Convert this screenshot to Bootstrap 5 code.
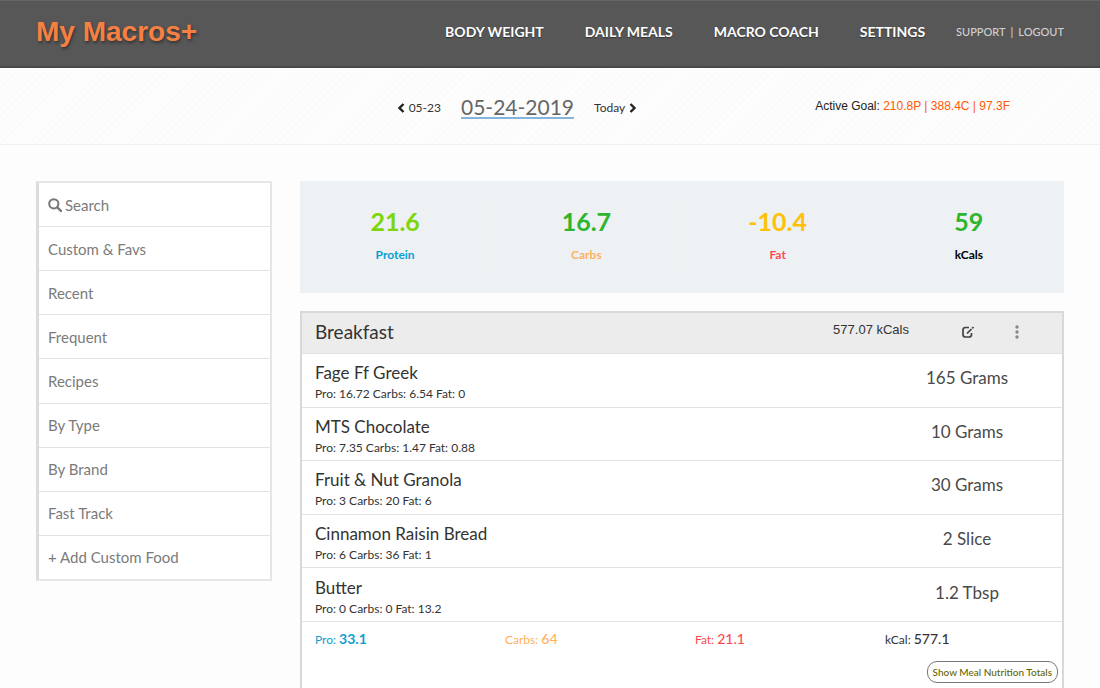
<!DOCTYPE html>
<html lang="en">
<head>
<meta charset="utf-8">
<meta name="viewport" content="width=device-width, initial-scale=1">
<title>My Macros+</title>
<link href="https://cdn.jsdelivr.net/npm/bootstrap@5.3.0/dist/css/bootstrap.min.css" rel="stylesheet">
<style>
  :root { --edge: 36px; --line: #e2e2e2; --protein: #0a9fd0; --carbs: #ffb15e; --fat: #ff4b50; }
  body { font-family: Lato, "Open Sans", sans-serif; font-size: 14px; line-height: 20px; color: #333; background: #fdfdfd; }
  a { color: inherit; text-decoration: none; }

  .topbar { background: #575757; border-top: 1px solid #666; border-bottom: 2px solid #484848; min-height: 68px; padding: 0 var(--edge) 4px; }
  .brand { font: bold 28px/40px "Liberation Sans", Arial, sans-serif; color: #f58042; text-shadow: 1px 2px 3px #333; }
  .main-links { gap: 41px; font-size: 14px; font-weight: 700; color: #fff; text-shadow: 0 1px 1px #333; }
  .side-links { gap: 5px; margin-left: 31px; font-size: 11px; font-weight: 500; color: #d0d0d0; }

  .datebar { min-height: 77px; padding: 0 var(--edge); border-bottom: 1px solid #efefef;
    background: repeating-linear-gradient(135deg, #fdfdfd 0 3px, #fbfbfb 3px 5px); }
  .day-links { font-size: 12px; gap: 20px; padding: 3px 0 0 18px; }
  .day-links svg { width: 8px; height: 10px; }
  .current-day { font-size: 21px; line-height: 20px; color: #666; border-bottom: 2px solid #84b4dc; }
  .goal { font: 12px/16px "Liberation Sans", Arial, sans-serif; color: #222; padding-right: 54px; }
  .goal span { color: #ff5a00; }

  .page { padding: 36px var(--edge) 0; }
  .page > .row { --bs-gutter-x: 28px; }

  .food-menu { min-height: 400px; background: #fff; border: 2px solid #e6e6e6; border-left: 3px solid #dcdcdc; font-size: 15px; color: #7b7b7b; }
  .food-menu a { padding: 0 9px; gap: 3px; }
  .food-menu a + a { border-top: 1px solid var(--line); }

  .summary { background: #edf1f3; min-height: 112px; padding: 20px 0; }
  .summary .col + .col { border-left: 1px solid #f0f2f2; }
  .big-number { font-size: 25px; line-height: 40px; font-weight: 700; }
  .macro-name { font-size: 12px; line-height: 28px; font-weight: 700; }
  .c-protein { color: var(--protein); } .c-carbs { color: var(--carbs); } .c-fat { color: var(--fat); }
  .v-lime { color: #7ed60a; } .v-green { color: #2db52d; } .v-amber { color: #ffc107; }

  .meal { margin-top: 18px; background: #fff; border: 2px solid #d8d8d8; min-height: 400px; }
  .meal-head { background: #ececec; min-height: 41px; border-bottom: 1px solid var(--line); padding: 0 43px 3px 13px; }
  .meal-head h2 { font-size: 19px; line-height: 24px; margin: 0; font-weight: 400; }
  .meal-kcal { font: 13px/20px "Liberation Sans", Arial, sans-serif; padding-bottom: 4px; margin-right: 52px; }
  .icon-btn { padding: 0; border: 0; background: none; line-height: 1; }
  .icon-btn + .icon-btn { margin-left: 40px; }
  .foods { width: 100%; height: 268px; }
  .foods tr { border-bottom: 1px solid var(--line); }
  .foods td { padding: 6px 13px 0; }
  .foods td + td { width: 25%; padding: 0 0 4px; text-align: center; font-size: 17px; color: #4a4a4a; }
  .food-name { font-size: 17px; line-height: 22px; }
  .food-macros { font-size: 12px; line-height: 20px; }
  .totals { padding: 7px 0 0; font-size: 12px; }
  .totals > .col { padding-left: 13px; }
  .totals b { font-size: 14px; font-weight: 500; }
  .totals .c-protein b { font-weight: 700; }
  .pill { font-size: 10px; font-weight: 500; line-height: 14px; padding: 3px 5px; margin: 11px 4px 0 0; border: 1px solid #777; border-radius: 10px; background: #fff; color: #666600; }
</style>
</head>
<body>
<header class="topbar d-flex align-items-center">
  <a class="brand" href="#">My Macros+</a>
  <nav class="main-links d-flex ms-auto">
    <a href="#">BODY WEIGHT</a><a href="#">DAILY MEALS</a><a href="#">MACRO COACH</a><a href="#">SETTINGS</a>
  </nav>
  <nav class="side-links d-flex"><a href="#">SUPPORT</a><span>|</span><a href="#">LOGOUT</a></nav>
</header>

<section class="datebar row g-0 align-items-center">
  <div class="col-4 offset-4 day-links d-flex align-items-center">
    <a href="#" class="d-flex align-items-center gap-1"><svg viewBox="0 0 8 10"><path d="M6.500 1 2.500 5l4 4" fill="none" stroke="#222" stroke-width="2.400"/></svg>05-23</a>
    <a href="#" class="current-day">05-24-2019</a>
    <a href="#" class="d-flex align-items-center gap-1">Today<svg viewBox="0 0 8 10"><path d="m1.500 1 4 4-4 4" fill="none" stroke="#222" stroke-width="2.400"/></svg></a>
  </div>
  <div class="col-4 goal text-end">Active Goal: <span>210.8P | 388.4C | 97.3F</span></div>
</section>

<main class="page">
  <div class="row">
    <aside class="col-3">
      <nav class="food-menu d-flex flex-column">
        <a class="d-flex align-items-center flex-fill" href="#"><svg width="14" height="14" viewBox="0 0 14 14"><circle cx="5.800" cy="5.800" r="4.600" fill="none" stroke="#777" stroke-width="2"/><path d="m9.300 9.300 3.700 3.700" stroke="#777" stroke-width="2.400" stroke-linecap="round"/></svg>Search</a>
        <a class="d-flex align-items-center flex-fill" href="#">Custom &amp; Favs</a>
        <a class="d-flex align-items-center flex-fill" href="#">Recent</a>
        <a class="d-flex align-items-center flex-fill" href="#">Frequent</a>
        <a class="d-flex align-items-center flex-fill" href="#">Recipes</a>
        <a class="d-flex align-items-center flex-fill" href="#">By Type</a>
        <a class="d-flex align-items-center flex-fill" href="#">By Brand</a>
        <a class="d-flex align-items-center flex-fill" href="#">Fast Track</a>
        <a class="d-flex align-items-center flex-fill" href="#">+ Add Custom Food</a>
      </nav>
    </aside>
    <div class="col-9">
      <section class="summary row g-0 text-center">
        <div class="col"><div class="big-number v-lime">21.6</div><div class="macro-name c-protein">Protein</div></div>
        <div class="col"><div class="big-number v-green">16.7</div><div class="macro-name c-carbs">Carbs</div></div>
        <div class="col"><div class="big-number v-amber">-10.4</div><div class="macro-name c-fat">Fat</div></div>
        <div class="col"><div class="big-number v-green">59</div><div class="macro-name text-black">kCals</div></div>
      </section>

      <section class="meal">
        <div class="meal-head d-flex align-items-center">
          <h2>Breakfast</h2>
          <span class="meal-kcal ms-auto">577.07 kCals</span>
          <button class="icon-btn" type="button" aria-label="Edit meal"><svg width="14" height="14" viewBox="0 0 14 14"><path d="M8 2.500H4.500Q2 2.500 2 5v4.500Q2 12 4.500 12H8q2.500 0 2.500-2.500V8" fill="none" stroke="#444" stroke-width="1.700"/><path d="M6 8.500 10.500 4" stroke="#444" stroke-width="1.700"/><path d="m11.200 3.300 1.300-1.300" stroke="#444" stroke-width="1.700"/></svg></button>
          <button class="icon-btn" type="button" aria-label="More"><svg width="4" height="14" viewBox="0 0 4 14" fill="#888"><circle cx="2" cy="2" r="1.700"/><circle cx="2" cy="7" r="1.700"/><circle cx="2" cy="12" r="1.700"/></svg></button>
        </div>
        <table class="foods">
          <tr><td><div class="food-name">Fage Ff Greek</div><div class="food-macros">Pro: 16.72 Carbs: 6.54 Fat: 0</div></td><td>165 Grams</td></tr>
          <tr><td><div class="food-name">MTS Chocolate</div><div class="food-macros">Pro: 7.35 Carbs: 1.47 Fat: 0.88</div></td><td>10 Grams</td></tr>
          <tr><td><div class="food-name">Fruit &amp; Nut Granola</div><div class="food-macros">Pro: 3 Carbs: 20 Fat: 6</div></td><td>30 Grams</td></tr>
          <tr><td><div class="food-name">Cinnamon Raisin Bread</div><div class="food-macros">Pro: 6 Carbs: 36 Fat: 1</div></td><td>2 Slice</td></tr>
          <tr><td><div class="food-name">Butter</div><div class="food-macros">Pro: 0 Carbs: 0 Fat: 13.2</div></td><td>1.2 Tbsp</td></tr>
        </table>
        <div class="totals row g-0">
          <div class="col c-protein">Pro: <b>33.1</b></div>
          <div class="col c-carbs">Carbs: <b>64</b></div>
          <div class="col c-fat">Fat: <b>21.1</b></div>
          <div class="col">kCal: <b>577.1</b></div>
        </div>
        <div class="text-end"><button class="pill" type="button">Show Meal Nutrition Totals</button></div>
      </section>
    </div>
  </div>
</main>
<script src="https://cdn.jsdelivr.net/npm/bootstrap@5.3.0/dist/js/bootstrap.bundle.min.js"></script>
</body>
</html>
